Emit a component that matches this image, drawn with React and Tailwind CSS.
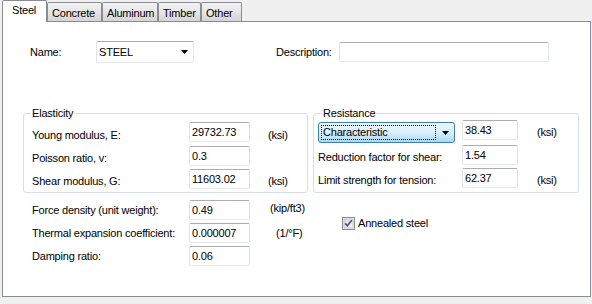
import React from "react";

const font = { fontFamily: '"Liberation Sans", Arial, sans-serif' };

function TextBox({ value, w = "w-[61px]" }) {
  return (
    <div
      className={`${w} h-[20px] flex items-center pl-[2px] bg-white border border-[#e3e9ef] border-t-[#abadb3] border-l-[#e2e3ea] border-r-[#dbdfe6] rounded-[2px] text-black`}
    >
      {value}
    </div>
  );
}

function Arrow() {
  return (
    <svg width="7" height="4" viewBox="0 0 7 4">
      <path d="M0 0H7L3.5 4Z" fill="#000" />
    </svg>
  );
}

function Tab({ label, w, selected }) {
  if (selected) {
    return (
      <div
        className={`${w} h-[22px] -mb-px relative z-10 bg-white border border-b-0 border-[#898c95] rounded-t-[2px] pl-[9px] pt-[3px] leading-[13px]`}
      >
        {label}
      </div>
    );
  }
  return (
    <div
      className={`${w} h-[19px] border border-b-0 border-[#898c95] rounded-t-[2px] pl-[4px] pt-[4px] leading-[13px] bg-gradient-to-b from-[#f2f2f2] via-[#e6e6e6] to-[#d4d4d4]`}
    >
      {label}
    </div>
  );
}

export default function App() {
  return (
    <div
      className="w-[592px] h-[304px] bg-[#f0f0f0] overflow-hidden text-[11px] leading-[13px] tracking-[-0.2px] text-black"
      style={font}
    >
      <div className="flex items-end pl-[2px] h-[21px]">
        <Tab label="Steel" w="w-[45px]" selected />
        <Tab label="Concrete" w="w-[55px]" />
        <Tab label="Aluminum" w="w-[56px]" />
        <Tab label="Timber" w="w-[43px]" />
        <Tab label="Other" w="w-[41px]" />
      </div>
      <div className="ml-[2px] w-[589px] h-[276px] bg-white border border-[#898c95]">
        {/* Name row */}
        <div className="flex items-center mt-[19px] h-[22px] pl-[27px]">
          <div className="w-[66px]">Name:</div>
          <div className="w-[98px] h-[22px] flex items-center justify-between pl-[2px] pr-[5px] bg-white border border-[#e3e9ef] border-t-[#abadb3] border-l-[#e2e3ea] rounded-[2px]">
            <span>STEEL</span>
            <Arrow />
          </div>
          <div className="ml-[82px] w-[63px]">Description:</div>
          <div className="w-[210px] h-[20px] bg-white border border-[#e3e9ef] border-t-[#abadb3] border-l-[#e2e3ea] rounded-[2px]" />
        </div>

        {/* Group boxes */}
        <div className="flex items-stretch mt-[44px] pl-[20px] gap-[5px]">
          <fieldset className="w-[285px] border border-[#d5dfe5] rounded-[3px] pl-[8px] pb-[3px]">
            <legend className="ml-[-1px] px-[1px] leading-[13px]">Elasticity</legend>
            <div className="flex items-center h-[20px] mt-[2px]">
              <div className="w-[157px] mt-[6px]">Young modulus, E:</div>
              <TextBox value="29732.73" />
              <div className="ml-[18px] mt-[6px]">(ksi)</div>
            </div>
            <div className="flex items-center h-[20px] mt-[4px]">
              <div className="w-[157px] mt-[5px]">Poisson ratio, v:</div>
              <TextBox value="0.3" />
            </div>
            <div className="flex items-center h-[20px] mt-[3px]">
              <div className="w-[157px] mt-[4px]">Shear modulus, G:</div>
              <TextBox value="11603.02" />
              <div className="ml-[18px] mt-[4px]">(ksi)</div>
            </div>
          </fieldset>
          <fieldset className="w-[266px] border border-[#d5dfe5] rounded-[3px] pl-[4px] pb-[3px]">
            <legend className="ml-[4px] px-[1px] leading-[13px]">Resistance</legend>
            <div className="flex items-start h-[22px]">
              <div className="mt-[2px] w-[137px] h-[21px] flex items-center rounded-[3px] border border-[#3c7fb1] bg-gradient-to-b from-[#eaf6fd] via-[#d9f0fc] to-[#a7d9f5] pl-[2px] pr-[5px]">
                <div className="flex-1 h-[15px] flex items-center pl-[1px] border border-dotted border-[#000000] leading-[13px]">
                  Characteristic
                </div>
                <div className="ml-[6px]">
                  <Arrow />
                </div>
              </div>
              <div className="ml-[7px]">
                <TextBox value="38.43" w="w-[56px]" />
              </div>
              <div className="ml-[19px] mt-[6px]">(ksi)</div>
            </div>
            <div className="flex items-center h-[20px] mt-[3px]">
              <div className="w-[144px] mt-[4px]">Reduction factor for shear:</div>
              <TextBox value="1.54" w="w-[56px]" />
            </div>
            <div className="flex items-center h-[20px] mt-[3px]">
              <div className="w-[144px] mt-[4px]">Limit strength for tension:</div>
              <TextBox value="62.37" w="w-[56px]" />
              <div className="ml-[19px] mt-[4px]">(ksi)</div>
            </div>
          </fieldset>
        </div>

        {/* Bottom section */}
        <div className="flex mt-[7px]">
          <div className="w-[327px] pl-[29px]">
            <div className="flex items-center h-[20px]">
              <div className="w-[157px]">Force density (unit weight):</div>
              <TextBox value="0.49" />
              <div className="ml-[20px] -mt-[4px]">(kip/ft3)</div>
            </div>
            <div className="flex items-center h-[20px] mt-[3px]">
              <div className="w-[157px]">Thermal expansion coefficient:</div>
              <TextBox value="0.000007" />
              <div className="ml-[26px]">(1/°F)</div>
            </div>
            <div className="flex items-center h-[20px] mt-[3px]">
              <div className="w-[157px]">Damping ratio:</div>
              <TextBox value="0.06" />
            </div>
          </div>
          <div className="ml-[12px] mt-[17px] flex items-center h-[13px] gap-[3px]">
            <svg width="13" height="13" viewBox="0 0 13 13">
              <defs>
                <linearGradient id="cbg" x1="0" y1="0" x2="1" y2="1">
                  <stop offset="0" stopColor="#d6d6d6" />
                  <stop offset="1" stopColor="#fdfdfd" />
                </linearGradient>
              </defs>
              <rect x="0.5" y="0.5" width="12" height="12" fill="#f4f4f4" stroke="#8e8f8f" />
              <rect x="2" y="2" width="9" height="9" fill="url(#cbg)" stroke="#c6c6c6" strokeWidth="1" />
              <path d="M3.2 6.4L5.3 8.8L9.8 3.2" fill="none" stroke="#3e5894" strokeWidth="1.7" />
            </svg>
            <span>Annealed steel</span>
          </div>
        </div>
      </div>
    </div>
  );
}
